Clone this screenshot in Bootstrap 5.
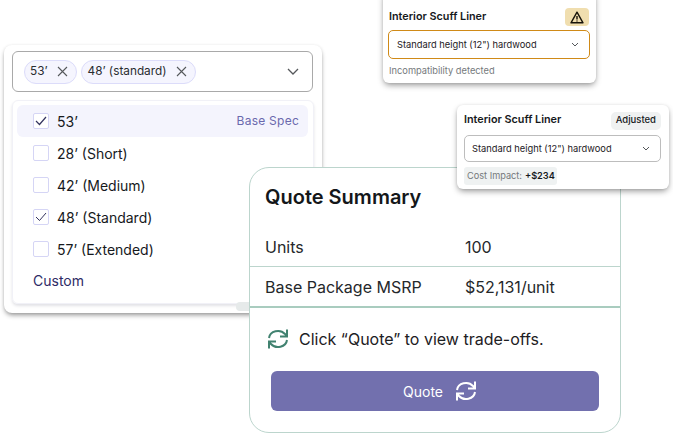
<!DOCTYPE html>
<html lang="en">
<head>
  <meta charset="UTF-8">
  <title>Quote Summary</title>
  <link href="https://cdn.jsdelivr.net/npm/bootstrap@5.3.3/dist/css/bootstrap.min.css" rel="stylesheet">
  <style>
    body { background: #fff; font-family: "Inter", "Liberation Sans", sans-serif; color: #16191c; overflow: hidden; }
    .canvas { position: relative; width: 673px; height: 433px; overflow: hidden; }

    /* multi select */
    .select-win { position: absolute; left: 4px; top: 45px; width: 318px; height: 268px; background: #fff; border-radius: 8px; padding: 6px 8px 0; box-shadow: 0 3px 5px -1px rgba(0,0,0,.42), 0 0 3px rgba(0,0,0,.07); }
    .select-box { height: 41px; width: 301px; border: 1px solid #a9a9a9; border-radius: 6px; padding: 0 13px 0 11px; }
    .chip { height: 24px; border: 1px solid #dcdcfa; background: #f5f5fe; border-radius: 12px; padding: 0 8px 0 5px; font-size: 11.8px; color: #2a2d30; gap: 9px; }
    .chip-wide { padding-left: 6px; }
    .select-panel { margin-top: 8px; width: 302px; height: 204px; border: 1px solid #f1f1f7; border-radius: 6px; padding: 3px 4px 4px; box-shadow: 0 2px 3px rgba(60,60,90,.15); }
    .opt { height: 32px; padding-left: 16px; border-radius: 6px; font-size: 14px; gap: 8px; }
    .opt-on { background: #f4f4fd; width: 291px; padding-right: 9px; margin-top: 1px; }
    .tick { width: 16px; height: 16px; border: 1px solid #d5d5f5; border-radius: 2px; background: #fff; flex: none; }
    .spec { font-size: 12px; color: #6a69ad; letter-spacing: .25px; }
    .custom-opt { color: #2e2b66; font-size: 14px; padding-left: 16px; height: 31px; }
    .scroll-nub { position: absolute; left: 232px; top: 257px; width: 20px; height: 9px; background: #e6eaea; border-radius: 4px; }

    /* small cards */
    .mini { position: absolute; background: #fff; border-radius: 6px; box-shadow: 0 3px 6px -1px rgba(0,0,0,.42), 0 0 3px rgba(0,0,0,.07); padding: 0 6px 0 5px; }
    .mini-warn { left: 383px; top: -10px; width: 213px; height: 93px; }
    .mini-adj { left: 457px; top: 105px; width: 212px; height: 84px; padding: 0 8px 0 7px; z-index: 2; }
    .warn-head { height: 40px; padding: 14px 1px 0 1px; }
    .adj-head { height: 30px; padding-top: 1px; }
    .mini-title { font-size: 10.8px; font-weight: 600; }
    .warn-icon { width: 24px; height: 18px; background: #f0deaf; border-radius: 4px; }
    .adj-tag { font-size: 9.5px; font-weight: 500; background: #eff1f1; border-radius: 5px; height: 18px; padding: 0 5px; }
    .field { border-radius: 5px; font-size: 9.3px; background: #fff; padding: 0 10px 0 8px; color: #1d2023; }
    .field-warn { height: 29px; border: 1px solid #d08a17; }
    .field-adj { height: 27px; border: 1px solid #bdbdbd; padding-left: 7px; }
    .hint { font-size: 9.3px; color: #75797c; margin: 5px 0 0 1px; }
    .cost { font-size: 9.2px; color: #74787b; background: #eff2f2; border-radius: 3px; height: 18px; padding: 0 3px; width: 93px; margin-top: 5px; gap: 3px; white-space: nowrap; }
    .cost b { color: #16191c; font-weight: 600; }

    /* quote card */
    .quote-win { position: absolute; left: 249px; top: 167px; width: 372px; height: 266px; background: #fff; border: 1px solid #bcd5cd; border-radius: 20px; }
    .quote-title { font-size: 20px; font-weight: 600; padding: 14px 15px 0; height: 59px; color: #14171a; }
    .quote-row { height: 40px; padding-left: 15px; font-size: 16px; color: #25282b; }
    .quote-row span:first-child { width: 200px; }
    .row-line { border-bottom: 1px solid #bcd5cd; }
    .row-line-dark { height: 41px; border-bottom: 2px solid #a9ccbf; }
    .click-note { font-size: 16px; gap: 10px; padding: 15px 17px 0; color: #1d2023; height: 47px; }
    .quote-btn { display: flex; background: #7270ae; color: #fff; border: 0; border-radius: 6px; width: 328px; height: 40px; margin: 16px 0 0 21px; font-size: 14px; gap: 12px; }
    .quote-btn.quote-btn { padding: 0 0 0 10px; }
    .quote-btn:hover { background: #7270ae; color: #fff; }
  </style>
</head>
<body>
  <div class="canvas">

    <div class="select-win">
      <div class="select-box d-flex align-items-center justify-content-between">
        <div class="d-flex gap-1">
          <span class="chip d-flex align-items-center">53’
            <svg width="11" height="11" viewBox="0 0 11 11" fill="none" stroke="#55585b" stroke-width="1.1"><path d="M1 1l9 9M10 1l-9 9"/></svg>
          </span>
          <span class="chip chip-wide d-flex align-items-center">48’ (standard)
            <svg width="11" height="11" viewBox="0 0 11 11" fill="none" stroke="#55585b" stroke-width="1.1"><path d="M1 1l9 9M10 1l-9 9"/></svg>
          </span>
        </div>
        <svg width="12" height="7" viewBox="0 0 12 7" fill="none" stroke="#55585b" stroke-width="1.3"><path d="M1 1l5 5 5-5"/></svg>
      </div>
      <div class="select-panel">
        <div class="opt opt-on d-flex align-items-center">
          <span class="tick d-flex align-items-center justify-content-center">
            <svg width="12" height="10" viewBox="0 0 12 10" fill="none" stroke="#34345f" stroke-width="1.2"><path d="M1 5l3.500 3.500L11 1"/></svg>
          </span>
          <span class="flex-grow-1">53’</span>
          <span class="spec">Base Spec</span>
        </div>
        <div class="opt d-flex align-items-center"><span class="tick"></span>28’ (Short)</div>
        <div class="opt d-flex align-items-center"><span class="tick"></span>42’ (Medium)</div>
        <div class="opt d-flex align-items-center">
          <span class="tick d-flex align-items-center justify-content-center">
            <svg width="12" height="10" viewBox="0 0 12 10" fill="none" stroke="#34345f" stroke-width="1"><path d="M1 5l3.500 3.500L11 1"/></svg>
          </span>
          48’ (Standard)
        </div>
        <div class="opt d-flex align-items-center"><span class="tick"></span>57’ (Extended)</div>
        <div class="custom-opt d-flex align-items-center">Custom</div>
      </div>
      <div class="scroll-nub"></div>
    </div>

    <div class="mini mini-warn">
      <div class="warn-head d-flex justify-content-between align-items-center">
        <span class="mini-title">Interior Scuff Liner</span>
        <span class="warn-icon d-flex align-items-center justify-content-center">
          <svg width="14" height="13" viewBox="0 0 14 13" fill="none" stroke="#17130a" stroke-width="1.4"><path d="M7 1.200L1 11.800h12z" stroke-linejoin="round"/><path d="M7 5v3.400M7 9.400v1.100"/></svg>
        </span>
      </div>
      <div class="field field-warn d-flex align-items-center justify-content-between">
        Standard height (12") hardwood
        <svg width="8" height="5" viewBox="0 0 8 5" fill="none" stroke="#55585b" stroke-width="1"><path d="M1 1l3 3 3-3"/></svg>
      </div>
      <div class="hint">Incompatibility detected</div>
    </div>

    <div class="mini mini-adj">
      <div class="adj-head d-flex justify-content-between align-items-center">
        <span class="mini-title">Interior Scuff Liner</span>
        <span class="adj-tag d-flex align-items-center">Adjusted</span>
      </div>
      <div class="field field-adj d-flex align-items-center justify-content-between">
        Standard height (12") hardwood
        <svg width="8" height="5" viewBox="0 0 8 5" fill="none" stroke="#55585b" stroke-width="1"><path d="M1 1l3 3 3-3"/></svg>
      </div>
      <div class="cost d-flex align-items-center">Cost Impact: <b>+$234</b></div>
    </div>

    <div class="quote-win">
      <div class="quote-title">Quote Summary</div>
      <div class="quote-row row-line d-flex align-items-center"><span>Units</span><span>100</span></div>
      <div class="quote-row row-line-dark d-flex align-items-center"><span>Base Package MSRP</span><span>$52,131/unit</span></div>
      <div class="click-note d-flex align-items-center">
        <svg width="22" height="22" viewBox="0 0 22 22" fill="none" stroke="#418270" stroke-width="2"><path d="M2 10a9 8 0 0 1 16-4l2 2.500M20 1.500v7h-7"/><path d="M20 12a9 8 0 0 1-16 4l-2-2.500M2 20.500v-7h7"/></svg>
        Click “Quote” to view trade-offs.
      </div>
      <button class="btn quote-btn align-items-center justify-content-center">
        Quote
        <svg width="22" height="22" viewBox="0 0 22 22" fill="none" stroke="#fff" stroke-width="2"><path d="M2 10a9 8 0 0 1 16-4l2 2.500M20 1.500v7h-7"/><path d="M20 12a9 8 0 0 1-16 4l-2-2.500M2 20.500v-7h7"/></svg>
      </button>
    </div>

  </div>
  <script src="https://cdn.jsdelivr.net/npm/bootstrap@5.3.3/dist/js/bootstrap.bundle.min.js"></script>
</body>
</html>
